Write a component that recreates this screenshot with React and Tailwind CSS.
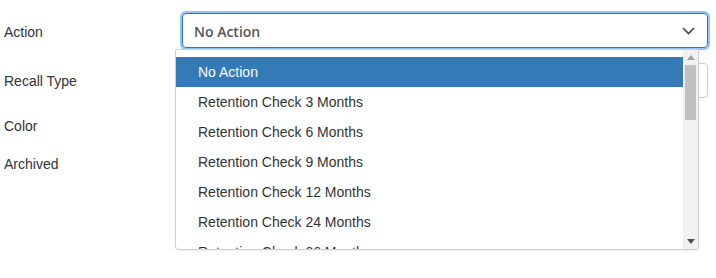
const options = [
  "No Action",
  "Retention Check 3 Months",
  "Retention Check 6 Months",
  "Retention Check 9 Months",
  "Retention Check 12 Months",
  "Retention Check 24 Months",
  "Retention Check 36 Months",
];

export default function App() {
  const selected = "No Action";

  return (
    <div
      className="relative w-[716px] h-[278px] bg-white text-[14px] text-[#333] overflow-hidden"
      style={{ fontFamily: "'Liberation Sans', Arial, sans-serif" }}
    >
      {/* Action */}
      <div className="flex items-center h-[35px] mt-[13px]">
        <label className="w-[182px] pl-[4px] pt-[3px]">Action</label>
        <div className="flex-1 mr-[8px] h-[35px] flex items-center justify-between pl-[11px] pr-[12px] border border-[#2f72b8] rounded-[4px] shadow-[0_0_0_2px_#93c4f3]">
          <span
            className="font-semibold text-[#555] pt-[2px]"
            style={{ fontFamily: "'Open Sans', sans-serif" }}
          >
            {selected}
          </span>
          <svg width="13" height="8" viewBox="0 0 13 8" fill="none">
            <path d="M1 1l5.5 5.5L12 1" stroke="#444" strokeWidth="1.6" />
          </svg>
        </div>
      </div>

      {/* Recall Type */}
      <div className="flex items-center h-[35px] mt-[15px]">
        <label className="w-[182px] pl-[4px] pt-[2px]">Recall Type</label>
        <div className="flex-1 mr-[8px] h-[35px] border border-[#ccc] rounded-[4px]" />
      </div>

      {/* Color */}
      <div className="flex items-center h-[34px] mt-[11px]">
        <label className="w-[182px] pl-[4px]">Color</label>
      </div>

      {/* Archived */}
      <div className="flex items-center h-[20px] mt-[10px]">
        <label className="w-[182px] pl-[4px] pt-[2px]">Archived</label>
      </div>

      {/* open dropdown */}
      <div className="absolute left-[175px] top-[49px] w-[524px] h-[201px] bg-white border border-[#d0d0d0] rounded-b-[4px] shadow-[0_1px_2px_rgba(0,0,0,0.08)] flex overflow-hidden">
        <ul className="flex-1 pt-[7px] overflow-hidden">
          {options.map((o) => (
            <li
              key={o}
              className={
                o === selected
                  ? "h-[30px] flex items-center pl-[22px] bg-[#337ab7] text-white"
                  : "h-[30px] flex items-center pl-[22px] text-[#333]"
              }
            >
              {o}
            </li>
          ))}
        </ul>
        <div className="w-[15px] bg-[#f1f1f1] flex flex-col items-center">
          <div className="h-[15px] flex items-center justify-center">
            <svg width="8" height="5" viewBox="0 0 8 5">
              <path d="M0 5L4 0l4 5z" fill="#a3a3a3" />
            </svg>
          </div>
          <div className="w-[11px] h-[55px] bg-[#c1c1c1]" />
          <div className="flex-1" />
          <div className="h-[15px] flex items-center justify-center">
            <svg width="8" height="5" viewBox="0 0 8 5">
              <path d="M0 0l4 5 4-5z" fill="#505050" />
            </svg>
          </div>
        </div>
      </div>
    </div>
  );
}
